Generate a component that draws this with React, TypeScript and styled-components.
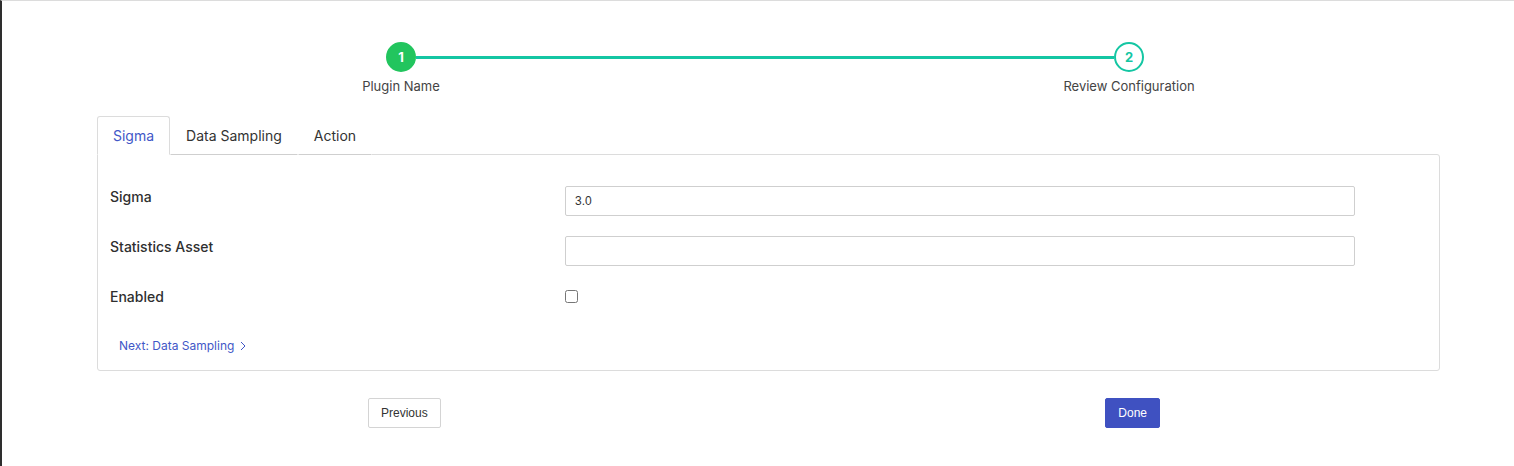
import React, { useState } from "react";
import styled, { createGlobalStyle } from "styled-components";

const GlobalStyle = createGlobalStyle`
  html, body {
    margin: 0;
    padding: 0;
    background: #ffffff;
    font-family: Inter, "Noto Sans", "Liberation Sans", sans-serif;
    color: #333333;
  }
  * {
    box-sizing: border-box;
  }
`;

const Page = styled.div`
  min-height: 466px;
  border-top: 1px solid #dcdcdc;
  border-left: 2px solid #2e2e2e;
  padding: 41px 74px 0 95px;
`;

const Stepper = styled.div`
  display: grid;
  grid-template-columns: 30px 1fr 30px;
  grid-template-rows: 30px auto;
  row-gap: 6px;
  padding: 0 296px 0 289px;
`;

const StepCircle = styled.div<{ $done?: boolean }>`
  width: 30px;
  height: 30px;
  border-radius: 50%;
  display: flex;
  align-items: center;
  justify-content: center;
  font-size: 13px;
  font-weight: 700;
  background: ${(p) => (p.$done ? "#22c55e" : "#ffffff")};
  color: ${(p) => (p.$done ? "#ffffff" : "#14c6a3")};
  border: 2px solid ${(p) => (p.$done ? "#22c55e" : "#14c6a3")};
`;

const Connector = styled.div`
  align-self: center;
  height: 3px;
  background: #14c6a3;
`;

const StepLabel = styled.div<{ $col: number }>`
  grid-column: ${(p) => p.$col};
  display: flex;
  justify-content: center;
  white-space: nowrap;
  font-size: 13px;
  line-height: 16px;
  color: #444444;
`;

const TabList = styled.div`
  display: flex;
  margin-top: 22px;
  position: relative;
  z-index: 1;
`;

const Tab = styled.button<{ $active?: boolean }>`
  height: 39px;
  padding: 0 15px;
  margin-bottom: -1px;
  font-family: inherit;
  font-size: 14px;
  background: #ffffff;
  cursor: pointer;
  color: ${(p) => (p.$active ? "#4257c7" : "#333333")};
  border: 1px solid ${(p) => (p.$active ? "#dcdcdc" : "transparent")};
  border-bottom: 1px solid ${(p) => (p.$active ? "#ffffff" : "#cfcfcf")};
  border-radius: ${(p) => (p.$active ? "3px 3px 0 0" : "0")};
`;

const Panel = styled.div`
  border: 1px solid #dcdcdc;
  border-radius: 0 3px 3px 3px;
  padding: 31px 12px 16px 12px;
`;

const FormRow = styled.div`
  display: grid;
  grid-template-columns: 455px 790px;
  align-items: center;
  height: 30px;
  margin-bottom: 20px;
`;

const Label = styled.label`
  align-self: start;
  padding-top: 3px;
  font-size: 14px;
  line-height: 16px;
  font-weight: 500;
  color: #2f2f2f;
`;

const TextInput = styled.input`
  height: 30px;
  width: 100%;
  border: 1px solid #cfcfcf;
  border-radius: 2px;
  padding: 0 9px;
  font-family: "Liberation Sans", Arial, sans-serif;
  font-size: 12px;
  color: #333333;
  outline: none;
`;

const Checkbox = styled.input`
  align-self: start;
  margin: 4px 0 0 0;
  width: 13px;
  height: 13px;
`;

const NextLink = styled.button`
  display: flex;
  align-items: center;
  gap: 6px;
  margin-top: 22px;
  margin-left: 9px;
  padding: 0;
  border: none;
  background: none;
  font-family: inherit;
  font-size: 12px;
  line-height: 16px;
  color: #4257c7;
  cursor: pointer;
`;

const Footer = styled.div`
  display: flex;
  justify-content: space-between;
  margin-top: 27px;
  padding: 0 280px 0 271px;
`;

const FooterButton = styled.button<{ $primary?: boolean }>`
  height: 30px;
  padding: 0 12px;
  font-family: "Liberation Sans", Arial, sans-serif;
  font-size: 12px;
  border-radius: 2px;
  cursor: pointer;
  background: ${(p) => (p.$primary ? "#3f51c1" : "#ffffff")};
  color: ${(p) => (p.$primary ? "#ffffff" : "#333333")};
  border: 1px solid ${(p) => (p.$primary ? "#3f51c1" : "#d4d4d4")};
`;

const tabs = ["Sigma", "Data Sampling", "Action"];

const App = () => {
  const [active, setActive] = useState(0);
  const [sigma, setSigma] = useState("3.0");
  const [asset, setAsset] = useState("");
  const [enabled, setEnabled] = useState(false);

  return (
    <>
      <GlobalStyle />
      <Page>
        <Stepper>
          <StepCircle $done>1</StepCircle>
          <Connector />
          <StepCircle>2</StepCircle>
          <StepLabel $col={1}>Plugin Name</StepLabel>
          <StepLabel $col={3}>Review Configuration</StepLabel>
        </Stepper>

        <TabList>
          {tabs.map((t, i) => (
            <Tab key={t} $active={i === active} onClick={() => setActive(i)}>
              {t}
            </Tab>
          ))}
        </TabList>
        <Panel>
          <FormRow>
            <Label>Sigma</Label>
            <TextInput value={sigma} onChange={(e) => setSigma(e.target.value)} />
          </FormRow>
          <FormRow>
            <Label>Statistics Asset</Label>
            <TextInput value={asset} onChange={(e) => setAsset(e.target.value)} />
          </FormRow>
          <FormRow>
            <Label>Enabled</Label>
            <Checkbox
              type="checkbox"
              checked={enabled}
              onChange={(e) => setEnabled(e.target.checked)}
            />
          </FormRow>
          <NextLink onClick={() => setActive(1)}>
            Next: Data Sampling
            <svg width="6" height="10" viewBox="0 0 6 10" fill="none">
              <path d="M1 1l4 4-4 4" stroke="#4257c7" strokeWidth="1" />
            </svg>
          </NextLink>
        </Panel>

        <Footer>
          <FooterButton>Previous</FooterButton>
          <FooterButton $primary>Done</FooterButton>
        </Footer>
      </Page>
    </>
  );
};

export default App;
